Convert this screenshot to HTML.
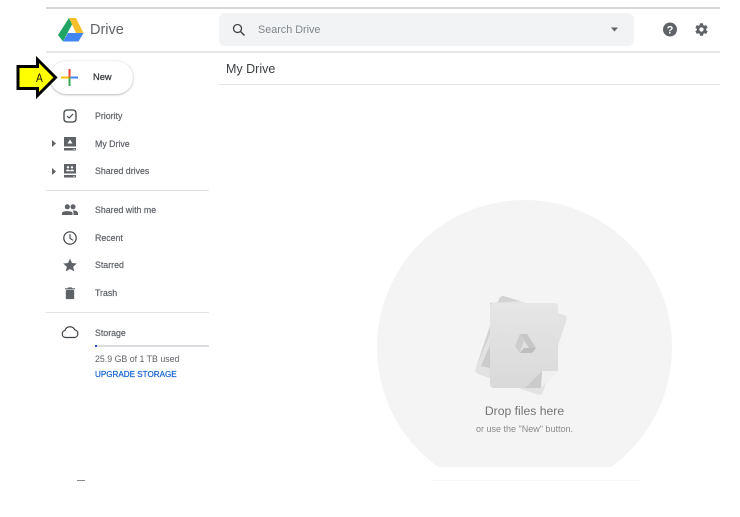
<!DOCTYPE html>
<html><head><meta charset="utf-8"><style>
html,body{margin:0;padding:0;background:#fff}
body{width:740px;height:517px;position:relative;overflow:hidden;font-family:"Liberation Sans",sans-serif;-webkit-font-smoothing:antialiased}
.a{position:absolute}
.t{position:absolute;font-size:8.8px;line-height:12px;color:#5f6368;white-space:nowrap;font-weight:400;-webkit-text-stroke:.2px #5f6368}
.l{position:absolute;left:46px;width:163px;height:1px;background:#e3e3e3}
svg{position:absolute;overflow:visible}
</style></head><body>
<div class="a" style="left:46px;top:7px;width:674px;height:2px;background:#d6d6d6"></div>
<div class="a" style="left:46px;top:51px;width:674px;height:2px;background:#e8e8e8"></div>
<div class="a" style="left:219px;top:84px;width:501px;height:1px;background:#e6e6e6"></div>

<svg style="left:57px;top:17px" width="27" height="25" viewBox="0 0 27 25">
<path d="M12 1 H19 L26.500 16 H19 Z" fill="#f6c02c"/>
<path d="M12 1 L15 7.500 L6 24.500 L1 18 Z" fill="#1fa463"/>
<path d="M11 16 H26.500 L21.500 24.500 H6 Z" fill="#4285f4"/>
</svg>
<div class="a" style="left:90px;top:20px;font-size:14.500px;line-height:20px;color:#5f6368">Drive</div>

<div class="a" style="left:219px;top:13px;width:415px;height:33px;border-radius:6px;background:#f1f3f4"></div>
<svg style="left:232px;top:22.500px" width="14" height="14" viewBox="0 0 14 14"><circle cx="5.500" cy="5.500" r="4" fill="none" stroke="#444" stroke-width="1.300"/><path d="M8.500 8.500 L12.500 12.500" stroke="#444" stroke-width="1.500"/></svg>
<div class="a" style="left:258px;top:23.500px;font-size:10.800px;line-height:13px;color:#80868b">Search Drive</div>
<svg style="left:611px;top:27px" width="8" height="5" viewBox="0 0 8 5"><path d="M0 .5 H7 L3.500 4.500 Z" fill="#5f6368"/></svg>

<svg style="left:662px;top:22px" width="16" height="16" viewBox="0 0 16 16"><circle cx="8" cy="7.500" r="7" fill="#5f6368"/><text x="8" y="11.500" text-anchor="middle" font-family="Liberation Sans" font-weight="700" font-size="11" fill="#fff">?</text></svg>
<svg style="left:694px;top:22px" width="15" height="15" viewBox="0 0 24 24"><path fill="#5f6368" d="M19.400 13c.04-.33.06-.66.06-1s-.02-.67-.06-1l2.100-1.650c.2-.15.25-.42.12-.64l-2-3.460c-.12-.22-.4-.3-.6-.22l-2.500 1c-.52-.4-1.080-.73-1.700-.98l-.37-2.650C14.400 2.170 14.200 2 14 2h-4c-.25 0-.46.170-.5.420l-.37 2.650c-.6.250-1.180.590-1.700.980l-2.500-1c-.22-.08-.48 0-.6.220l-2 3.460c-.13.220-.07.490.12.640L4.570 11c-.04.330-.07.670-.07 1s.03.670.07 1l-2.100 1.650c-.2.150-.25.420-.12.640l2 3.460c.12.220.4.300.6.220l2.500-1c.52.400 1.080.730 1.700.980l.37 2.650c.04.250.25.420.5.420h4c.25 0 .46-.170.5-.420l.37-2.650c.6-.250 1.180-.590 1.700-.980l2.500 1c.22.080.48 0 .6-.220l2-3.460c.13-.220.07-.490-.12-.640zM12 15.500a3.500 3.500 0 1 1 0-7 3.500 3.500 0 0 1 0 7z"/></svg>

<div class="a" style="left:226px;top:61px;font-size:12.500px;line-height:16px;color:#3c4043">My Drive</div>

<div class="a" style="left:50px;top:61px;width:83px;height:33px;border-radius:17px;background:#fff;box-shadow:0 1px 2px rgba(60,64,67,.3),0 0 2px rgba(60,64,67,.15)"></div>
<svg style="left:61px;top:69px" width="17" height="17" viewBox="0 0 17 17">
<rect x="7.500" y="0" width="2" height="7.500" fill="#ea4335"/><rect x="7.500" y="9.500" width="2" height="7.500" fill="#34a853"/><rect x="0" y="7.500" width="7.500" height="2" fill="#fbbc04"/><rect x="9.500" y="7.500" width="7.500" height="2" fill="#4285f4"/><rect x="7.500" y="7.500" width="2" height="2" fill="#b58a30"/></svg>
<div class="a" style="left:93px;top:71px;font-size:9.300px;line-height:12px;color:#3c4043;-webkit-text-stroke:.3px #3c4043">New</div>
<svg style="left:16px;top:55px" width="44" height="46" viewBox="0 0 44 46"><path d="M2 11.500 H21.500 V4.500 L39.500 22.500 L21.500 40.500 V33.500 H2 Z" fill="#ffff00" stroke="#000" stroke-width="3" stroke-linejoin="miter" stroke-miterlimit="6"/></svg>
<div class="a" style="left:35.500px;top:70.500px;font-size:12px;line-height:14px;color:#111;transform:scaleX(.85);transform-origin:left">A</div>

<svg style="left:63px;top:109px" width="14" height="14" viewBox="0 0 14 14"><rect x="1" y="1" width="12" height="12" rx="3" fill="none" stroke="#3c4043" stroke-width="1.300"/><path d="M4 7 L6.200 9 L10 5" fill="none" stroke="#3c4043" stroke-width="1.100"/></svg>
<div class="t" style="left:95px;top:110px">Priority</div>

<svg style="left:52px;top:140px" width="4" height="7" viewBox="0 0 4 7"><path d="M0 0 L4 3.500 L0 7 Z" fill="#5f6368"/></svg>
<svg style="left:63px;top:137px" width="14" height="14" viewBox="0 0 14 14"><rect x="1" y="0" width="12" height="9.500" fill="#5f6368"/><path d="M7 2.500 L9.500 6.500 H4.500 Z" fill="#fff"/><rect x="1" y="11" width="12" height="2.500" fill="#5f6368"/><rect x="10.500" y="11.800" width="1.200" height="1" fill="#fff"/></svg>
<div class="t" style="left:95px;top:138px">My Drive</div>

<svg style="left:52px;top:168px" width="4" height="7" viewBox="0 0 4 7"><path d="M0 0 L4 3.500 L0 7 Z" fill="#5f6368"/></svg>
<svg style="left:63px;top:164px" width="14" height="14" viewBox="0 0 14 14"><rect x="1" y="0" width="12" height="9.500" fill="#5f6368"/><circle cx="5" cy="3.300" r="1.200" fill="#fff"/><circle cx="9" cy="3.300" r="1.200" fill="#fff"/><path d="M3 7.200 C3 5 7 5 7 7.200 C7 5 11 5 11 7.200 Z" fill="#fff"/><rect x="1" y="11" width="12" height="2.500" fill="#5f6368"/><rect x="10.500" y="11.800" width="1.200" height="1" fill="#fff"/></svg>
<div class="t" style="left:95px;top:165px">Shared drives</div>

<div class="l" style="top:190px"></div>

<svg style="left:62px;top:204px" width="16" height="12" viewBox="0 0 16 12"><circle cx="5.300" cy="2.800" r="2.500" fill="#5f6368"/><circle cx="11" cy="2.800" r="2.500" fill="#5f6368"/><path d="M0 11 V9 C0 6.500 10.500 6.500 10.500 9 V11 Z" fill="#5f6368"/><path d="M11.500 11 V8.500 C11.500 7.600 11 7 10.500 6.500 C13 6.200 16 7.200 16 9 V11 Z" fill="#5f6368"/></svg>
<div class="t" style="left:95px;top:204px">Shared with me</div>

<svg style="left:63px;top:231px" width="14" height="14" viewBox="0 0 14 14"><circle cx="7" cy="7" r="6.200" fill="none" stroke="#3c4043" stroke-width="1.200"/><path d="M7 3.300 V7.300 L10 9.300" fill="none" stroke="#3c4043" stroke-width="1.100"/></svg>
<div class="t" style="left:95px;top:232px">Recent</div>

<svg style="left:63px;top:258px" width="14" height="14" viewBox="0 0 24 24"><path fill="#5f6368" d="M12 1 L15.400 8.600 L23.600 9.500 L17.500 15 L19.200 23 L12 18.900 L4.800 23 L6.500 15 L.4 9.500 L8.600 8.600 Z"/></svg>
<div class="t" style="left:95px;top:259px">Starred</div>

<svg style="left:65px;top:286.500px" width="10" height="12.500" viewBox="0 0 12 14"><rect x="1" y="3" width="10" height="11" rx="1" fill="#5f6368"/><rect x="0" y="1" width="12" height="1.300" fill="#5f6368"/><rect x="3.500" y="0" width="5" height="1.500" fill="#5f6368"/></svg>
<div class="t" style="left:95px;top:287px">Trash</div>

<div class="l" style="top:312px"></div>

<svg style="left:61px;top:325px" width="18" height="14" viewBox="0 0 18 14"><path d="M4.500 12.500 A3.600 3.600 0 0 1 4 5.400 A5.200 5.200 0 0 1 13.700 4.800 A3.900 3.900 0 0 1 13.500 12.500 Z" fill="none" stroke="#3c4043" stroke-width="1.200"/></svg>
<div class="t" style="left:95px;top:327px">Storage</div>
<div class="a" style="left:95px;top:345px;width:114px;height:2px;background:#dadce0"></div>
<div class="a" style="left:95px;top:345px;width:2px;height:2px;background:#1a56d6"></div>
<div class="t" style="left:95px;top:353px;-webkit-text-stroke:0">25.9 GB of 1 TB used</div>
<div class="t" style="left:95px;top:368.500px;color:#1a66d2;font-size:8.100px;-webkit-text-stroke:.25px #1a66d2">UPGRADE STORAGE</div>

<div class="a" style="left:377px;top:200px;width:295px;height:267px;overflow:hidden"><div style="width:295px;height:295px;border-radius:50%;background:#f4f4f4"></div></div>
<div class="a" style="left:431px;top:480px;width:209px;height:1px;background:#f8f8f8"></div>
<div class="a" style="left:77px;top:480px;width:8px;height:1px;background:#8a8a8a"></div>

<svg style="left:470px;top:290px" width="100" height="110" viewBox="0 0 100 110">
<defs><linearGradient id="g" x1="0" y1="0" x2="0" y2="1"><stop offset="0" stop-color="#e6e6e6"/><stop offset="1" stop-color="#d9d9d9"/></linearGradient></defs>
<path d="M35 6.500 L94 25 Q97.500 26 96.500 30 L73 102 Q71.500 106 67.500 104.500 L8 84 Q4.500 82.500 5.500 79 L29 9 Q31 5 35 6.500 Z" fill="#e2e2e2"/>
<path d="M35 6.500 L50 11 L20 13 L20 44 L5.500 79 L29 9 Q31 5 35 6.500 Z" fill="#d2d2d2"/>
<path d="M20 55 L20 78 L11 76 Z" fill="#cbcbcb"/>
<path d="M24 13 H84 Q88 13 88 17 V81 L71 98 H24 Q20 98 20 94 V17 Q20 13 24 13 Z" fill="url(#g)"/>
<path d="M72 81 H88 L71 98 Z" fill="#f0f0f0"/>
<path d="M55 98 L72 81 L71 98 Z" fill="#cbcbcb"/>
<path d="M50 44 H57 L66 58 H59 Z" fill="#c6c6c6"/>
<path d="M50 44 L54 51 L49.500 63 L45 56 Z" fill="#cdcdcd"/>
<path d="M54 58 H66 L62 63 H50 Z" fill="#bdbdbd"/>
</svg>

<div class="a" style="left:377px;top:403px;width:295px;text-align:center;font-size:12.200px;line-height:16px;color:#757575">Drop files here</div>
<div class="a" style="left:377px;top:423px;width:295px;text-align:center;font-size:9px;line-height:12px;color:#8a8a8a">or use the "New" button.</div>
</body></html>
